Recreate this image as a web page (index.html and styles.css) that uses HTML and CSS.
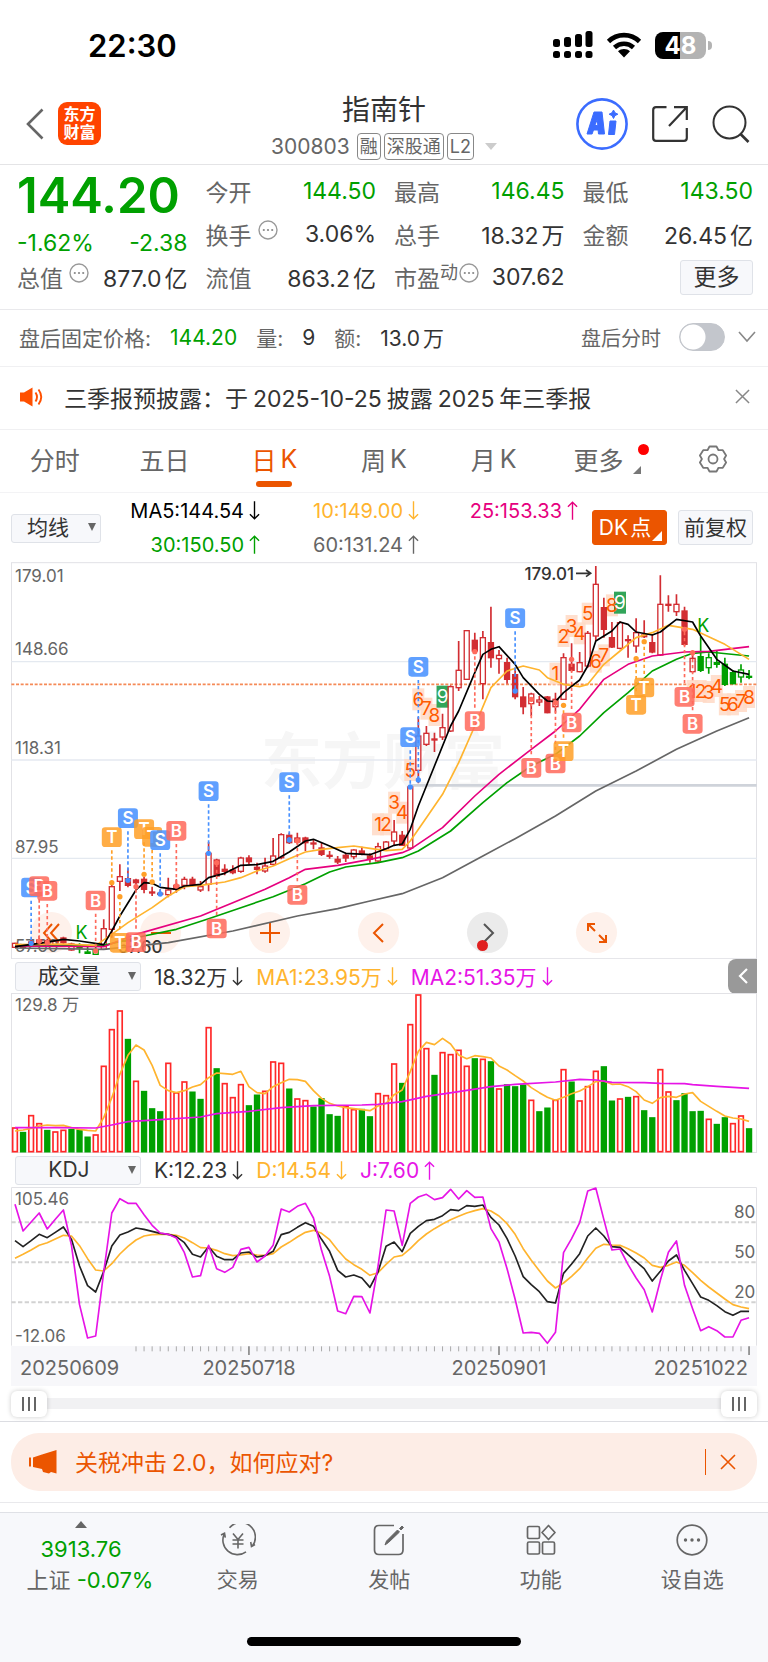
FILE: index.html
```html
<!DOCTYPE html>
<html lang="zh-CN">
<head>
    <meta charset="UTF-8">
    <meta name="viewport" content="width=device-width, initial-scale=1.0">
    <title>指南针 300803</title>
    <link rel="stylesheet" href="styles.css">
</head>
<body>
    <!-- Shared icons -->
    <svg class="sprite" aria-hidden="true">
        <symbol id="up" viewBox="0 0 12 22"><path d="M6 21V2M1 7l5-5 5 5" fill="none" stroke="currentColor" stroke-width="1.5"/></symbol>
        <symbol id="down" viewBox="0 0 12 22"><path d="M6 1v19M1 15l5 5 5-5" fill="none" stroke="currentColor" stroke-width="1.5"/></symbol>
        <symbol id="info" viewBox="0 0 20 20"><circle cx="10" cy="10" r="9" fill="none" stroke="#999" stroke-width="1.4"/><g fill="#888"><circle cx="5.8" cy="10" r="1.1"/><circle cx="10" cy="10" r="1.1"/><circle cx="14.2" cy="10" r="1.1"/></g></symbol>
        <symbol id="close" viewBox="0 0 16 16"><path d="M1 1l14 14M15 1L1 15" fill="none" stroke="currentColor" stroke-width="1.6"/></symbol>
    </svg>

    <div class="status-bar">
        <span class="clock">22:30</span>
        <div class="status-icons">
            <svg width="40" height="28" viewBox="0 0 40 28">
                <rect x="0" y="8" width="7" height="8" rx="2.5"/><rect x="11" y="6" width="7" height="10" rx="2.5"/><rect x="22" y="3" width="7" height="13" rx="2.5"/><rect x="32.5" y="0" width="7" height="16" rx="2.5"/>
                <rect x="0" y="20" width="7" height="7" rx="2.5"/><rect x="11" y="20" width="7" height="7" rx="2.5"/><rect x="22" y="20" width="7" height="7" rx="2.5"/><rect x="32.5" y="20" width="7" height="7" rx="2.5"/>
            </svg>
            <svg width="36" height="26" viewBox="0 0 36 26">
                <path d="M2.5 9.500C11 1 25 1 33.500 9.500M8.500 15.500C14 10.500 22 10.500 27.500 15.500" fill="none" stroke="#000" stroke-width="4.600"/>
                <path d="M18 25.500l-6-6.200c3.400-3 8.600-3 12 0z"/>
            </svg>
            <div class="battery"><span>48</span></div>
        </div>
    </div>

    <header class="header">
        <div class="header-left">
            <button class="icon-btn" aria-label="返回">
                <svg width="18" height="32" viewBox="0 0 18 32"><path d="M16.500 1.500L2 16l14.500 14.500" fill="none" stroke="#666" stroke-width="2.600"/></svg>
            </button>
            <div class="logo">东方<br>财富</div>
        </div>
        <div class="header-title">
            <h1>指南针</h1>
            <div class="sub">
                <span class="code">300803</span>
                <span class="tag">融</span>
                <span class="tag">深股通</span>
                <span class="tag">L2</span>
                <i class="caret"></i>
            </div>
        </div>
        <div class="header-right">
            <button class="icon-btn" aria-label="AI">
                <svg width="52" height="52" viewBox="0 0 52 52">
                    <circle cx="26" cy="26" r="24.600" fill="none" stroke="#3b6cff" stroke-width="2.600"/>
                    <path d="M11 36L18 14h8l2.500 22h-6l-.4-4h-4.600l-1.400 4zM18.800 27.500h3l-.5-6z" fill="#3b6cff" fill-rule="evenodd" stroke="#3b6cff" stroke-width="1" stroke-linejoin="round"/>
                    <path d="M34 23h6l-1.500 13.500h-6zM37.500 12l1.500 2.800 2.900 1.400-2.900 1.400-1.500 2.900-1.500-2.900-2.900-1.400 2.900-1.400z" fill="#3b6cff" stroke="#3b6cff" stroke-width="1" stroke-linejoin="round"/>
                </svg>
            </button>
            <button class="icon-btn" aria-label="分享">
                <svg width="36" height="36" viewBox="0 0 36 36"><path d="M14.500 1.200H4Q1.200 1.200 1.200 4v28Q1.200 34.800 4 34.800h28Q34.800 34.800 34.800 32V22M17 20L34.500 1.500M22 1.200h12.800V14" fill="none" stroke="#333" stroke-width="2.200"/></svg>
            </button>
            <button class="icon-btn" aria-label="搜索">
                <svg width="38" height="38" viewBox="0 0 38 38"><circle cx="17.500" cy="17.500" r="16" fill="none" stroke="#333" stroke-width="2"/><path d="M28.500 29l8 8" stroke="#333" stroke-width="2.600"/></svg>
            </button>
        </div>
    </header>

    <section class="quote">
        <div class="quote-main">
            <div class="price">144.20</div>
            <div class="change"><span>-1.62%</span><span>-2.38</span></div>
            <div class="item"><span class="label">总值<svg class="info"><use href="#info"/></svg></span><span>877.0<b>亿</b></span></div>
        </div>
        <div class="quote-grid">
            <div class="item"><span class="label">今开</span><span class="green">144.50</span></div>
            <div class="item"><span class="label">最高</span><span class="green">146.45</span></div>
            <div class="item"><span class="label">最低</span><span class="green">143.50</span></div>
            <div class="item"><span class="label">换手<svg class="info"><use href="#info"/></svg></span><span>3.06%</span></div>
            <div class="item"><span class="label">总手</span><span>18.32<b>万</b></span></div>
            <div class="item"><span class="label">金额</span><span>26.45<b>亿</b></span></div>
            <div class="item"><span class="label">流值</span><span>863.2<b>亿</b></span></div>
            <div class="item"><span class="label">市盈<small>动</small><svg class="info"><use href="#info"/></svg></span><span>307.62</span></div>
            <div class="item last"><button class="btn">更多</button></div>
        </div>
    </section>

    <section class="after-hours">
        <span class="label">盘后固定价格:</span><span class="green">144.20</span>
        <span class="label">量:</span><span>9</span>
        <span class="label">额:</span><span>13.0<b>万</b></span>
        <label class="switch-label">盘后分时<input type="checkbox" class="switch"></label>
        <svg class="chevron" width="18" height="12" viewBox="0 0 18 12"><path d="M1 1l8 9 8-9" fill="none" stroke="#888" stroke-width="1.600"/></svg>
    </section>

    <section class="notice">
        <svg width="24" height="22" viewBox="0 0 24 22"><path d="M0 6.500h4L12.500 1.500v19L4 15.500H0z" fill="#ff5000"/><path d="M15.500 6.500q3 4.500 0 9M18.500 3.500q5.500 7.500 0 15" fill="none" stroke="#ff5000" stroke-width="1.900"/></svg>
        <p>三季报预披露：于<span>2025-10-25</span>披露<span>2025</span>年三季报</p>
        <button class="icon-btn" aria-label="关闭"><svg width="15" height="15"><use href="#close"/></svg></button>
    </section>

    <nav class="tabs">
        <button>分时</button>
        <button>五日</button>
        <button class="active">日<span>K</span></button>
        <button>周<span>K</span></button>
        <button>月<span>K</span></button>
        <button class="more">更多</button>
        <button aria-label="设置">
            <svg width="28" height="28" viewBox="0 0 28 28"><path d="M10.500 1.500h7l2 3.700h4.300l3.300 5.300-2 3.500 2 3.500-3.300 5.300h-4.300l-2 3.700h-7l-2-3.700H4.200L.9 17.500l2-3.500-2-3.500 3.300-5.300h4.300z" fill="none" stroke="#777" stroke-width="1.800" stroke-linejoin="round"/><circle cx="14" cy="14" r="4.500" fill="none" stroke="#777" stroke-width="1.800"/></svg>
        </button>
    </nav>

    <section class="ma-row">
        <span class="picker"><select aria-label="主图指标"><option>均线</option></select></span>
        <div class="ma-values">
            <span class="black">MA5:144.54<svg class="arrow"><use href="#down"/></svg></span>
            <span class="orange">10:149.00<svg class="arrow"><use href="#down"/></svg></span>
            <span class="pink">25:153.33<svg class="arrow"><use href="#up"/></svg></span>
            <span class="green">30:150.50<svg class="arrow"><use href="#up"/></svg></span>
            <span class="gray">60:131.24<svg class="arrow"><use href="#up"/></svg></span>
        </div>
        <button class="btn dk">DK<b>点</b></button>
        <button class="btn">前复权</button>
    </section>

    <main class="charts">
        <div class="price-chart">
            <div class="chart-tools">
                <button aria-label="最早"><svg viewBox="0 0 20 20"><path d="M10 1L2 10l8 9M17 1L9 10l8 9"/></svg></button>
                <button aria-label="缩小"><svg viewBox="0 0 20 20"><path d="M0 10h20"/></svg></button>
                <button aria-label="放大"><svg viewBox="0 0 20 20"><path d="M0 10h20M10 0v20"/></svg></button>
                <button aria-label="向左"><svg viewBox="0 0 20 20"><path d="M14 1L5 10l9 9"/></svg></button>
                <button aria-label="向右" class="dark"><svg viewBox="0 0 20 20"><path d="M6 1l9 9-9 9"/></svg></button>
                <button aria-label="全屏"><svg viewBox="0 0 20 20"><path d="M8 8L1 1M1 8V1h7M12 12l7 7M19 12v7h-7"/></svg></button>
            </div>
            <svg id="priceChart" viewBox="33 38 2238 1191"></svg>
        </div>

        <div class="chart-head">
            <span class="picker wide"><select aria-label="副图指标一"><option>成交量</option></select></span>
            <span>18.32万<svg class="arrow"><use href="#down"/></svg></span>
            <span class="orange">MA1:23.95万<svg class="arrow"><use href="#down"/></svg></span>
            <span class="magenta">MA2:51.35万<svg class="arrow"><use href="#down"/></svg></span>
            <button class="drawer" aria-label="展开"><svg width="10" height="16" viewBox="0 0 10 16"><path d="M9 1L2 8l7 7" fill="none" stroke="#fff" stroke-width="2.200"/></svg></button>
        </div>
        <svg id="volumeChart" viewBox="33 131 2238 480"></svg>

        <div class="chart-head">
            <span class="picker wide"><select aria-label="副图指标二"><option>KDJ</option></select></span>
            <span>K:12.23<svg class="arrow"><use href="#down"/></svg></span>
            <span class="orange">D:14.54<svg class="arrow"><use href="#down"/></svg></span>
            <span class="magenta">J:7.60<svg class="arrow"><use href="#up"/></svg></span>
        </div>
        <svg id="kdjChart" viewBox="33 115 2238 597"></svg>

        <div class="range">
            <input type="range" min="0" max="100" value="0" aria-label="开始日期">
            <input type="range" min="0" max="100" value="100" aria-label="结束日期">
        </div>
    </main>

    <section class="promo">
        <div class="promo-pill">
            <svg width="28" height="24" viewBox="0 0 28 24"><path d="M0 7.500h2v9H0zM4 7.500L13 4.500 27.500 0v23.500L22 22l-2 1.500-6-1.500-1-3-9-2z" fill="#eb5500"/></svg>
            <a href="#">关税冲击<span>2.0</span>，如何应对?</a>
            <button class="icon-btn" aria-label="关闭"><svg width="16" height="16"><use href="#close"/></svg></button>
        </div>
    </section>

    <footer class="bottom">
        <nav>
            <a href="#" class="index">
                <i class="tri"></i>
                <span class="green">3913.76</span>
                <span>上证 <span class="green">-0.07%</span></span>
            </a>
            <a href="#">
                <svg width="36" height="32" viewBox="0 0 36 32"><path d="M9.500 3.800A14.500 14.500 0 0 1 32 22.500M26 27.800A14.500 14.500 0 0 1 4.500 9.500M1 11l3.500-1.800.8 4.500M35 20.500l-3.500 2-.8-4.500M13 9.500l5 6 5-6M18 15.500v9M12.500 16h11M12.500 20h11" fill="none" stroke="#666" stroke-width="1.600"/></svg>
                <span>交易</span>
            </a>
            <a href="#">
                <svg width="32" height="32" viewBox="0 0 32 32"><path d="M21 1.500H6Q1.500 1.500 1.500 6v20Q1.500 30.500 6 30.500h19.500Q30 30.500 30 26V10" fill="none" stroke="#666" stroke-width="1.700"/><path d="M12 21l1.500-4L24.500 6l2 2-11 10.500zM26.500 4.500L29 2l1.500 1.500L28 6z" fill="#666" stroke="#666"/></svg>
                <span>发帖</span>
            </a>
            <a href="#">
                <svg width="30" height="32" viewBox="0 0 30 32"><g fill="none" stroke="#666" stroke-width="1.700"><rect x="1.500" y="2.500" width="12" height="12" rx="1.500"/><rect x="1.500" y="18" width="12" height="12" rx="1.500"/><rect x="16.500" y="18" width="12" height="12" rx="1.500"/><path d="M22.500 1.500l6.500 7-6.500 7-6.500-7z" stroke-linejoin="round"/></g></svg>
                <span>功能</span>
            </a>
            <a href="#">
                <svg width="32" height="32" viewBox="0 0 32 32"><circle cx="16" cy="16" r="14.800" fill="none" stroke="#666" stroke-width="1.700"/><g fill="#666"><circle cx="9.500" cy="16" r="1.700"/><circle cx="16" cy="16" r="1.700"/><circle cx="22.500" cy="16" r="1.700"/></g></svg>
                <span>设自选</span>
            </a>
        </nav>
        <div class="home-bar"></div>
    </footer>

    <script src="charts.js"></script>
</body>
</html>
```

FILE: styles.css
```css
* {
    box-sizing: border-box;
}
body {
    margin: 0;
    background: #fff;
    color: #333;
    font-family: Inter, "Noto Sans CJK SC", sans-serif;
    font-size: 23px;
}
button, select {
    font: inherit;
    color: inherit;
}
button {
    padding: 0;
    border: none;
    background: none;
    cursor: pointer;
}
a {
    color: inherit;
    text-decoration: none;
}
b {
    font-weight: 400;
    margin-left: 3px;
}
svg {
    display: block;
    flex: none;
}
.sprite {
    position: absolute;
    width: 0;
    height: 0;
}
.green { color: #00a000; }
.orange { color: #ffb42e; }
.pink { color: #e6007e; }
.magenta { color: #e614e6; }
.gray { color: #666; }
.black { color: #000; }
.label { color: #666; }

/* status bar */
.status-bar {
    display: flex;
    justify-content: space-between;
    align-items: center;
    height: 90px;
    padding: 0 56px 0 88px;
    color: #000;
}
.clock {
    font-size: 31px;
    font-weight: 600;
}
.status-icons {
    display: flex;
    align-items: center;
    gap: 13px;
}
.battery {
    position: relative;
    width: 51px;
    height: 27px;
    margin-right: 6px;
    border-radius: 8px;
    background: linear-gradient(90deg, #000 49%, #b3b3b3 49%);
    color: #fff;
    font-size: 24px;
    font-weight: 700;
    line-height: 27px;
    text-align: center;
}
.battery::after {
    content: "";
    position: absolute;
    right: -6px;
    top: 9px;
    width: 4px;
    height: 9px;
    border-radius: 0 4px 4px 0;
    background: #b3b3b3;
}

/* header */
.header {
    display: grid;
    grid-template-columns: 1fr auto 1fr;
    height: 75px;
    border-bottom: 1px solid #e4e4e6;
}
.header-left, .header-right {
    display: flex;
    align-items: center;
    padding-bottom: 7px;
}
.header-left {
    gap: 14px;
    padding-left: 26px;
}
.header-right {
    justify-content: flex-end;
    gap: 24px;
    padding-right: 18px;
}
.logo {
    width: 43px;
    height: 43px;
    padding-top: 3px;
    border-radius: 9px;
    background: #ff4400;
    color: #fff;
    font-size: 16px;
    font-weight: 700;
    line-height: 18px;
    text-align: center;
}
h1 {
    margin: 0;
    padding-top: 2px;
    font-size: 28px;
    font-weight: 400;
    line-height: 36px;
    text-align: center;
}
.sub {
    display: flex;
    align-items: center;
    gap: 3px;
    padding-top: 5px;
    color: #666;
}
.code {
    margin-right: 4px;
    font-size: 21px;
    line-height: 27px;
}
.tag {
    height: 27px;
    padding: 0 2px;
    border: 1px solid #888;
    border-radius: 4px;
    font-size: 18px;
    line-height: 25px;
}
.caret {
    margin-left: 8px;
    border: 6px solid transparent;
    border-top: 7px solid #ccc;
    border-bottom: none;
}

/* quote */
.quote {
    display: grid;
    grid-template-columns: repeat(4, 1fr);
    gap: 18px;
    padding: 7px 15px 8px 17px;
    border-bottom: 1px solid #e9e9ec;
}
.quote-main {
    display: grid;
    grid-template-rows: 48px 38px 43px;
}
.quote-grid {
    grid-column: span 3;
    display: grid;
    grid-template-columns: repeat(3, 1fr);
    grid-auto-rows: 43px;
    column-gap: 18px;
}
.price {
    color: #00a000;
    font-size: 49px;
    font-weight: 600;
    line-height: 48px;
}
.change {
    display: flex;
    justify-content: space-between;
    align-items: flex-end;
    color: #00a000;
    line-height: 30px;
}
.item {
    display: flex;
    justify-content: space-between;
    align-items: center;
    padding-bottom: 5px;
    white-space: nowrap;
}
.item .label {
    display: flex;
    align-items: center;
}
.item.last {
    justify-content: flex-end;
}
.item small {
    margin-bottom: 12px;
    font-size: 18px;
}
.info {
    width: 20px;
    height: 20px;
    margin: 0 0 8px 6px;
}
small + .info {
    margin-left: 1px;
}
.btn {
    height: 35px;
    padding: 0 5px;
    border: 1px solid #dfe2e8;
    border-radius: 3px;
    background: #f7f8fb;
    font-size: 21px;
    line-height: 31px;
    white-space: nowrap;
}
.item .btn {
    width: 73px;
    font-size: 23px;
}

/* after hours */
.after-hours {
    display: flex;
    align-items: center;
    gap: 19px;
    height: 57px;
    padding: 0 12px 2px 19px;
    border-bottom: 1px solid #f0f0f2;
    font-size: 21px;
}
.switch-label {
    display: flex;
    align-items: center;
    gap: 18px;
    margin-left: auto;
    color: #666;
    font-size: 20px;
}
.switch {
    appearance: none;
    width: 46px;
    height: 28px;
    margin: 0;
    border: 1px solid #c3c6cc;
    border-radius: 14px;
    background: radial-gradient(circle at 13px 13px, #fff 12px, #c3c6cc 13px);
}
.chevron {
    margin-left: -6px;
}

/* notice */
.notice {
    display: flex;
    align-items: center;
    height: 63px;
    padding: 0 18px 3px 20px;
    border-bottom: 1px solid #f0f0f2;
}
.notice p {
    flex: 1;
    margin: 0 0 0 20px;
}
.notice p span {
    margin: 0 5px;
}
.notice .icon-btn {
    color: #888;
}

/* period tabs */
.tabs {
    display: grid;
    grid-template-columns: repeat(7, 1fr);
    height: 63px;
    border-bottom: 1px solid #f3f3f5;
    color: #666;
    font-size: 25px;
}
.tabs button {
    position: relative;
    display: flex;
    justify-content: center;
    align-items: center;
    padding-bottom: 4px;
}
.tabs span {
    margin-left: 4px;
}
.tabs .active {
    color: #eb5500;
}
.tabs .active::after {
    content: "";
    position: absolute;
    bottom: 5px;
    width: 36px;
    height: 6px;
    border-radius: 3px;
    background: #eb5500;
}
.tabs .more {
    padding-right: 10px;
}
.more::before {
    content: "";
    position: absolute;
    right: 9px;
    top: 14px;
    width: 11px;
    height: 11px;
    border-radius: 50%;
    background: #f00;
}
.more::after {
    content: "";
    position: absolute;
    right: 17px;
    bottom: 18px;
    border: 4px solid transparent;
    border-right-color: #777;
    border-bottom-color: #777;
}

/* moving averages */
.ma-row {
    display: flex;
    align-items: center;
    height: 69px;
    padding: 0 15px 0 11px;
}
.picker {
    position: relative;
    flex: none;
    width: 90px;
    height: 29px;
}
.picker select {
    appearance: none;
    width: 100%;
    height: 100%;
    padding: 0 16px 2px 15px;
    border: 1px solid #dfe2e8;
    border-radius: 3px;
    background: #f7f8fb;
    font-size: 21px;
    line-height: 25px;
}
.picker::after {
    content: "";
    position: absolute;
    right: 5px;
    top: 10px;
    border: 4px solid transparent;
    border-top: 8px solid #666;
    border-bottom: none;
    pointer-events: none;
}
.picker.wide {
    width: 126px;
}
.picker.wide select {
    padding: 0 22px 2px 4px;
    text-align: center;
    text-align-last: center;
}
.ma-values {
    flex: 1;
    display: grid;
    grid-template-columns: repeat(3, 1fr);
    margin-right: 14px;
    font-size: 20px;
    line-height: 34px;
}
.ma-values span, .chart-head > span {
    display: flex;
    justify-content: flex-end;
    align-items: center;
    white-space: nowrap;
}
.arrow {
    width: 11px;
    height: 21px;
    margin-left: 5px;
}
.ma-row .btn {
    width: 75px;
}
.ma-row .btn + .btn {
    margin-left: 11px;
}
.btn b {
    margin-left: 2px;
}
.ma-row .dk {
    position: relative;
    border-color: #eb5500;
    background: #eb5500;
    color: #fff;
    padding-right: 14px;
}
.dk::after {
    content: "";
    position: absolute;
    right: 4px;
    bottom: 3px;
    border: 5px solid transparent;
    border-right-color: #fff;
    border-bottom-color: #fff;
}

/* charts */
.charts {
    padding: 0 11px;
    border-bottom: 1px solid #dcdde2;
}
.charts > svg, .price-chart > svg {
    width: 100%;
    height: auto;
}
.price-chart {
    position: relative;
}
.price-chart > svg {
    position: relative;
    pointer-events: none;
}
.chart-tools {
    position: absolute;
    left: 20px;
    bottom: 6px;
    display: flex;
    gap: 68px;
}
.chart-tools button {
    position: relative;
    display: grid;
    place-items: center;
    width: 41px;
    height: 41px;
    border-radius: 50%;
    background: #fef1eb;
    color: #eb5500;
}
.chart-tools svg {
    width: 20px;
    height: 20px;
    fill: none;
    stroke: currentColor;
    stroke-width: 2;
}
.chart-tools .dark {
    background: #ebebeb;
    color: #555;
}
.dark::after {
    content: "";
    position: absolute;
    left: 10px;
    bottom: 2px;
    width: 11px;
    height: 11px;
    border-radius: 50%;
    background: #e02020;
}
.chart-head {
    display: flex;
    align-items: center;
    gap: 13px;
    height: 34px;
    padding-left: 4px;
    font-size: 21px;
}
.drawer {
    display: grid;
    place-items: center;
    width: 29px;
    height: 35px;
    margin-left: auto;
    border-radius: 8px 0 0 8px;
    background: #999;
}
.axis { fill: #666; font-size: 51px; }
.axis-date { fill: #666; font-size: 60px; }
.end { text-anchor: end; }
.middle { text-anchor: middle; }
.watermark { fill: #f6f6f6; font-size: 183px; font-weight: 700; }
.frame { fill: none; stroke: #e2e2e6; stroke-width: 3; }
.grid { stroke: #e4e9f0; stroke-width: 4; }
.level { stroke: #d2d2d2; stroke-width: 6; stroke-dasharray: 13 7; }
.line { fill: none; stroke-width: 5; stroke-linejoin: round; }
.mark { fill: #fff; font-size: 51px; font-weight: 600; text-anchor: middle; }
.count { fill: #ff5a00; font-size: 57px; text-anchor: middle; }
.peak { fill: #333; font-size: 51px; font-weight: 500; }
.cross { fill: #00a000; font-size: 54px; text-anchor: middle; }

/* range slider */
.range {
    display: flex;
    height: 35px;
    align-items: center;
}
.range input {
    appearance: none;
    flex: 1;
    min-width: 0;
    height: 28px;
    margin: 0;
    background: linear-gradient(#f1f1f3, #f1f1f3) center / 100% 11px no-repeat;
}
.range input::-webkit-slider-thumb {
    appearance: none;
    width: 36px;
    height: 26px;
    border-radius: 6px;
    background:
        linear-gradient(#666, #666) 11px 6px / 2px 14px no-repeat,
        linear-gradient(#666, #666) 17px 6px / 2px 14px no-repeat,
        linear-gradient(#666, #666) 23px 6px / 2px 14px no-repeat,
        #fff;
    box-shadow: 0 0 5px rgba(0, 0, 0, .2);
}

/* promo */
.promo {
    padding: 11px;
    border-bottom: 1px solid #e9e9ec;
}
.promo-pill {
    display: flex;
    align-items: center;
    height: 58px;
    padding: 0 21px 0 18px;
    border-radius: 28px;
    background: #fdede6;
    color: #eb5500;
}
.promo a {
    flex: 1;
    margin-left: 18px;
    padding-bottom: 3px;
}
.promo a span {
    margin-left: 5px;
}
.promo .icon-btn {
    padding: 5px 0 5px 14px;
    border-left: 1px solid #eb5500;
}

/* bottom bar */
.bottom {
    height: 150px;
    margin-top: 9px;
    border-top: 1px solid #dfe1e6;
    background: #f7f8fb;
}
.bottom nav {
    display: grid;
    grid-template-columns: 162px repeat(4, 1fr);
    height: 124px;
    color: #666;
    font-size: 21px;
    line-height: 30px;
}
.bottom a {
    display: flex;
    flex-direction: column;
    align-items: center;
    gap: 9px;
    padding-top: 11px;
}
.bottom .index {
    gap: 1px;
    padding: 8px 0 0 18px;
    font-size: 22px;
    white-space: nowrap;
}
.index > span:nth-child(2) {
    margin-right: 18px;
}
.tri {
    margin: 0 18px 5px 0;
    border: 6px solid transparent;
    border-top: none;
    border-bottom: 7px solid #666;
}
.home-bar {
    width: 274px;
    height: 9px;
    margin: 0 auto;
    border-radius: 5px;
    background: #000;
}
```

FILE: charts.js
```js
// Plot units: three per pixel at the default width, one column every 24.2 units.
const colX = i => 45 + 24.2 * i;
const RED = "#d22d32";
const GREEN = "#00a000";

// high, body top, body bottom, low, kind (r/g hollow, R/G filled)
const candles = [
    [1180,1182,1194,1196,"r"],[1184,1186,1194,1196,"R"],[1172,1178,1188,1192,"R"],[1160,1172,1182,1190,"R"],[1168,1175,1186,1190,"R"],
    [1172,1176,1190,1192,"r"],[1162,1166,1180,1184,"R"],[1180,1184,1202,1204,"r"],[1182,1190,1196,1212,"G"],[1192,1208,1212,1214,"G"],
    [1190,1202,1215,1216,"g"],[1110,1138,1200,1202,"r"],[1005,1012,1140,1165,"r"],[945,982,996,1025,"r"],[957,988,1008,1014,"R"],
    [988,992,1000,1022,"R"],[983,990,1020,1032,"R"],[1012,1028,1031,1040,"R"],[1020,1032,1035,1040,"R"],[985,1022,1036,1044,"r"],
    [990,1008,1020,1030,"R"],[982,990,1008,1020,"r"],[982,990,1005,1012,"R"],[995,1012,1022,1028,"r"],[878,912,1005,1026,"r"],
    [928,932,980,982,"R"],[945,960,966,978,"R"],[948,962,970,975,"R"],[922,926,966,970,"r"],[918,926,937,945,"R"],
    [940,954,960,975,"R"],[925,950,965,970,"r"],[866,920,945,948,"r"],[852,856,925,930,"r"],[850,858,880,884,"R"],
    [850,866,878,885,"R"],[862,866,880,905,"R"],[870,881,884,900,"R"],[880,896,915,920,"R"],[905,918,921,928,"R"],
    [920,930,938,944,"R"],[910,918,926,938,"R"],[900,902,922,930,"r"],[892,905,915,918,"R"],[912,920,930,940,"R"],
    [880,892,935,938,"r"],[875,878,898,900,"r"],[812,848,875,890,"r"],[845,858,888,890,"R"],[710,713,896,898,"r"],
    [503,560,663,702,"r"],[530,552,585,590,"r"],[550,569,572,608,"R"],[493,535,563,572,"r"],[408,412,545,548,"r"],
    [275,363,415,425,"r"],[242,244,390,392,"r"],[250,273,305,310,"R"],[245,265,403,450,"r"],[172,280,325,355,"R"],
    [302,318,328,373,"r"],[325,340,390,403,"R"],[360,376,442,450,"R"],[413,443,472,495,"R"],[430,434,463,500,"r"],
    [440,452,458,470,"r"],[440,443,490,492,"R"],[430,450,472,490,"r"],[312,325,450,452,"r"],[282,345,363,367,"R"],
    [308,340,367,369,"r"],[245,252,350,355,"r"],[50,105,260,275,"r"],[145,175,240,265,"R"],[218,265,293,296,"R"],
    [216,220,297,300,"r"],[258,271,274,325,"R"],[207,250,290,310,"r"],[213,257,262,266,"r"],[255,280,308,312,"R"],
    [78,165,317,320,"r"],[138,165,168,187,"R"],[135,165,187,200,"r"],[172,185,285,290,"R"],[305,327,367,370,"r"],
    [262,322,363,368,"G"],[312,325,355,373,"g"],[305,340,345,355,"G"],[325,345,405,410,"G"],[362,370,403,405,"G"],
    [345,362,383,400,"g"],[362,381,384,390,"G"]
];

const averages = {
    "#666": [[0,1196],[11,1200],[19,1180],[27,1145],[35,1100],[40,1078],[44,1055],[48,1033],[53,985],[58,920],[62,868],[67,800],[72,725],[77,665],[82,600],[87,545],[91,505]],
    "#00a000": [[0,1190],[11,1188],[16,1160],[20,1140],[24,1108],[28,1075],[32,1042],[36,1003],[39,968],[41,953],[45,940],[48,925],[50,905],[54,845],[58,760],[61,700],[64,650],[67,615],[70,560],[73,490],[76,430],[79,365],[82,330],[84,312],[86,308],[91,320]],
    "#e6007e": [[0,1190],[11,1192],[15,1155],[23,1100],[27,1060],[31,1020],[34,985],[36,960],[40,948],[44,930],[48,910],[49,900],[53,835],[57,740],[60,675],[64,600],[67,545],[70,480],[73,390],[76,345],[79,320],[83,308],[86,306],[91,292]],
    "#ffb42e": [[0,1186],[6,1184],[10,1188],[12,1155],[14,1120],[17,1075],[19,1040],[21,1012],[23,1008],[26,998],[28,985],[30,965],[32,950],[34,928],[36,908],[38,900],[40,895],[42,890],[44,897],[46,904],[48,900],[49,875],[51,805],[53,735],[55,640],[57,530],[59,415],[61,365],[63,350],[65,362],[66,385],[68,405],[70,412],[71,405],[73,345],[75,305],[77,265],[79,250],[81,228],[84,240],[86,262],[88,285],[89,300],[91,330]],
    "#000": [[0,1192],[3,1182],[6,1170],[8,1175],[11,1186],[12,1145],[13,1100],[15,1022],[16,1000],[17,1002],[18,1014],[20,1020],[21,1010],[23,1005],[24,985],[26,972],[28,948],[30,946],[32,936],[34,908],[36,875],[37,870],[39,890],[41,912],[44,916],[46,898],[47,888],[48,884],[49,840],[50,770],[52,650],[54,530],[55,485],[57,370],[58,315],[59,300],[60,292],[62,345],[63,385],[65,435],[66,455],[67,457],[68,430],[70,392],[71,350],[72,275],[74,245],[75,218],[76,225],[77,248],[79,257],[80,248],[82,210],[84,218],[85,260],[87,330],[89,365],[91,375]]
};

// column, badge y, letter, y of the dot on the candle
const signals = [
    [2,1014,"S",1182],[3,1010,"B",1176],[4,1024,"B",1180],[10,1053,"B",1205],[12,863,"T",1000],[14,806,"S",993],
    [16,839,"T",975],[17,862,"T",998],[18,872,"S",1034],[20,844,"B",1010],[24,725,"S",912],[34,698,"S",872],
    [13,1180,"T",1042],[15,1178,"B",1012],[25,1137,"B",940],[35,1036,"B",874],[49,563,"S",713],[50,352,"S",692],
    [57,515,"B",307],[62,206,"S",425],[64,655,"B",450],[67,642,"B",460],[68,605,"T",468],[69,519,"B",330],
    [77,466,"T",328],[78,414,"T",277],[83,442,"B",240],[84,523,"B",310]
];
const signalColors = { S: "#4690ff", B: "#ff6a5c", T: "#ffa028" };

// column, y, number
const counts = [
    [45,825,1],[46,825,2],[47,760,3],[48,790,4],[49,662,5],[50,450,6],[51,478,7],[52,497,8],[53,442,9],
    [67,373,1],[68,260,2],[69,230,3],[70,252,4],[71,193,5],[72,337,6],[73,318,7],[74,168,8],[75,160,9],
    [84,425,1],[85,425,2],[86,428,3],[87,410,4],[88,465,5],[89,465,6],[90,455,7],[91,443,8]
];

const volumes = [
    535,549,498,522,543,547,542,540,542,563,556,350,240,184,270,395,426,478,487,341,430,397,428,450,234,358,402,444,405,469,
    437,425,337,341,419,448,453,473,448,496,501,470,480,480,502,432,438,343,402,225,136,297,378,309,315,302,350,328,329,337,
    418,406,412,407,452,487,476,452,360,398,454,411,365,352,455,448,444,441,484,505,360,427,454,433,487,486,509,525,505,522,499,538
];
const volumeKinds =
    "rgrrgrrgggrrrrgrgggrrrggrgrrrggrrrgrrggggrrggrrrgrrrgrrrrgrgrgggrggrrgrrrggrgrggrrggggrggrrg";
const volumeMa1 = [
    545,542,537,530,527,529,528,535,540,543,545,505,445,375,318,287,302,348,408,424,430,424,413,406,385,371,373,375,366,412,
    430,433,412,400,390,391,396,424,447,462,470,475,478,481,484,470,462,436,422,367,306,279,286,267,284,317,328,319,322,326,
    350,362,379,395,415,430,444,453,444,433,425,412,397,395,405,404,412,427,452,462,445,441,444,434,430,456,471,486,500,506,509,516
];
const volumeMa2 = [[0,535],[5,535],[10,536],[12,527],[14,517],[18,511],[23,503],[25,493],[29,486],[33,475],[37,469],[43,467],[45,465],[48,457],[51,441],[55,427],[59,412],[62,405],[67,398],[70,390],[72,392],[74,399],[78,400],[80,402],[83,403],[84,406],[87,411],[91,417]];

const kdj = {
    "#ffb42e": [
        329,317,304,290,282,271,260,262,291,330,364,367,345,316,293,274,262,258,257,257,260,268,282,297,298,305,315,321,319,315,
        319,320,315,295,281,265,251,245,254,273,304,331,348,362,380,372,347,325,320,300,276,256,240,226,213,203,193,186,180,187,
        202,225,257,300,335,366,397,418,403,383,360,328,299,287,289,290,300,313,328,350,356,350,340,350,372,395,415,433,451,468,475,480
    ],
    "#222": [
        276,294,276,257,267,251,235,272,352,411,430,368,292,259,250,238,242,248,254,257,264,282,317,325,294,323,333,333,313,310,
        325,321,308,258,251,236,222,233,272,308,365,385,379,388,416,370,293,280,309,254,233,216,212,201,183,186,171,173,169,206,
        229,270,322,384,408,429,459,463,374,346,315,262,238,262,294,296,318,339,360,397,368,337,319,365,405,445,455,471,489,500,488,488
    ],
    "#e614e6": [
        167,247,220,193,241,212,184,290,468,568,562,370,193,150,164,164,198,230,253,257,268,312,385,381,290,360,371,356,302,296,
        340,322,290,181,190,173,164,208,305,383,487,495,443,444,493,353,184,187,290,164,145,137,153,147,122,151,126,146,145,240,
        280,360,452,553,551,554,584,551,312,270,222,127,118,213,304,301,348,388,423,490,395,311,277,410,480,546,534,546,565,565,515,507
    ]
};

function line(points, color) {
    const list = points.map((p, i) => Array.isArray(p) ? `${colX(p[0])},${p[1]}` : `${colX(i)},${p}`);
    return `<polyline class="line" stroke="${color}" points="${list.join(" ")}"/>`;
}

function text(x, y, value, cls) {
    return `<text x="${x}" y="${y}" class="${cls}">${value}</text>`;
}

function drawPrice() {
    let out = text(783, 704, "东方财富", "watermark");
    out += `<rect class="frame" x="34.5" y="40" width="2235" height="1188"/>`;
    for (const y of [337, 632, 927]) {
        out += `<line class="grid" x1="34" x2="2270" y1="${y}" y2="${y}"/>`;
    }
    out += `<line x1="1236" x2="2270" y1="708" y2="708" stroke="#cfd3da" stroke-width="8"/>`;
    out += `<line x1="34" x2="2270" y1="405" y2="405" stroke="#f58a57" stroke-width="5" stroke-dasharray="9 5"/>`;
    out += text(45, 98, "179.01", "axis") + text(45, 318, "148.66", "axis") + text(45, 615, "118.31", "axis");
    out += text(45, 911, "87.95", "axis") + text(45, 1208, "57.60", "axis") + text(354, 1212, "57.60", "peak");

    for (const [i, y, n] of counts) {
        const x = colX(i);
        out += `<rect x="${x - 18}" y="${y - 33}" width="36" height="66" fill="${n === 9 ? "#32a55a" : "#ffd9c6"}" ${n === 9 ? "" : 'opacity=".85"'}/>`;
    }
    candles.forEach(([high, top, bottom, low, kind], i) => {
        const x = colX(i);
        const color = kind.toLowerCase() === "r" ? RED : GREEN;
        const fill = kind === "r" || kind === "g" ? "none" : color;
        out += `<path d="M${x} ${high}V${top}M${x} ${bottom}V${low}" stroke="${color}" stroke-width="5"/>`;
        out += `<rect x="${x - 7.5}" y="${top}" width="15" height="${bottom - top}" fill="${fill}" stroke="${color}" stroke-width="4"/>`;
    });
    for (const color in averages) {
        out += line(averages[color], color);
    }
    for (const [i, y, n] of counts) {
        out += `<text class="count" x="${colX(i)}" y="${y + 20}" ${n === 9 ? 'style="fill:#fff"' : ""}>${n}</text>`;
    }
    for (const [i, y, letter, dot] of signals) {
        const x = colX(i);
        const color = signalColors[letter];
        const edge = y < dot ? y + 40 : y - 40;
        out += `<line x1="${x}" x2="${x}" y1="${edge}" y2="${dot}" stroke="${color}" stroke-width="5" stroke-dasharray="10 8"/>`;
        out += `<circle cx="${x}" cy="${dot}" r="8" fill="${color}"/>`;
        out += `<rect x="${x - 30}" y="${y - 29}" width="60" height="59" rx="10" fill="${color}" opacity=".86"/>`;
        out += text(x, y + 19, letter, "mark");
    }
    out += text(245, 1168, "K", "cross") + text(2110, 249, "K", "cross");
    out += text(1722, 92, "179.01", "peak end");
    out += `<path d="M1728 72h42M1758 62l14 10-14 10" fill="none" stroke="#333" stroke-width="5"/>`;
    document.getElementById("priceChart").innerHTML = out;
}

function drawVolume() {
    let out = `<rect class="frame" x="34.5" y="132.5" width="2235" height="477"/>`;
    volumes.forEach((y, i) => {
        const red = volumeKinds[i] === "r";
        out += `<rect x="${colX(i) - 7}" y="${y + 1}" width="14" height="${606 - y}" fill="${red ? "#fff" : GREEN}" stroke="${red ? "#ff2828" : GREEN}" stroke-width="5"/>`;
    });
    out += line(volumeMa1, "#ffb42e") + line(volumeMa2, "#e614e6");
    out += text(45, 186, "129.8 万", "axis");
    document.getElementById("volumeChart").innerHTML = out;
}

function drawKdj() {
    let out = `<path class="frame" d="M34.5 591V116.5H2269.5V591"/>`;
    out += `<rect x="33" y="592" width="2238" height="120" fill="#f7f7fa"/>`;
    [[221, 80], [341, 50], [461, 20]].forEach(([y, value]) => {
        out += `<line class="level" x1="34" x2="2270" y1="${y}" y2="${y}"/>`;
        out += text(2266, y - 13, value, "axis end");
    });
    for (const color in kdj) {
        out += line(kdj[color], color);
    }
    out += text(45, 168, "105.46", "axis") + text(45, 580, "-12.06", "axis");
    for (let i = 15; i < 92; i++) {
        const major = i === 29 || i === 60 || i === 91;
        out += `<line x1="${colX(i)}" x2="${colX(i)}" y1="593" y2="${major ? 619 : 608}" stroke="${major ? "#888" : "#aaa"}" stroke-width="${major ? 5 : 3}"/>`;
    }
    out += text(60, 678, "20250609", "axis-date") + text(747, 678, "20250718", "axis-date middle");
    out += text(1497, 678, "20250901", "axis-date middle") + text(2244, 678, "20251022", "axis-date end");
    document.getElementById("kdjChart").innerHTML = out;
}

drawPrice();
drawVolume();
drawKdj();
```
